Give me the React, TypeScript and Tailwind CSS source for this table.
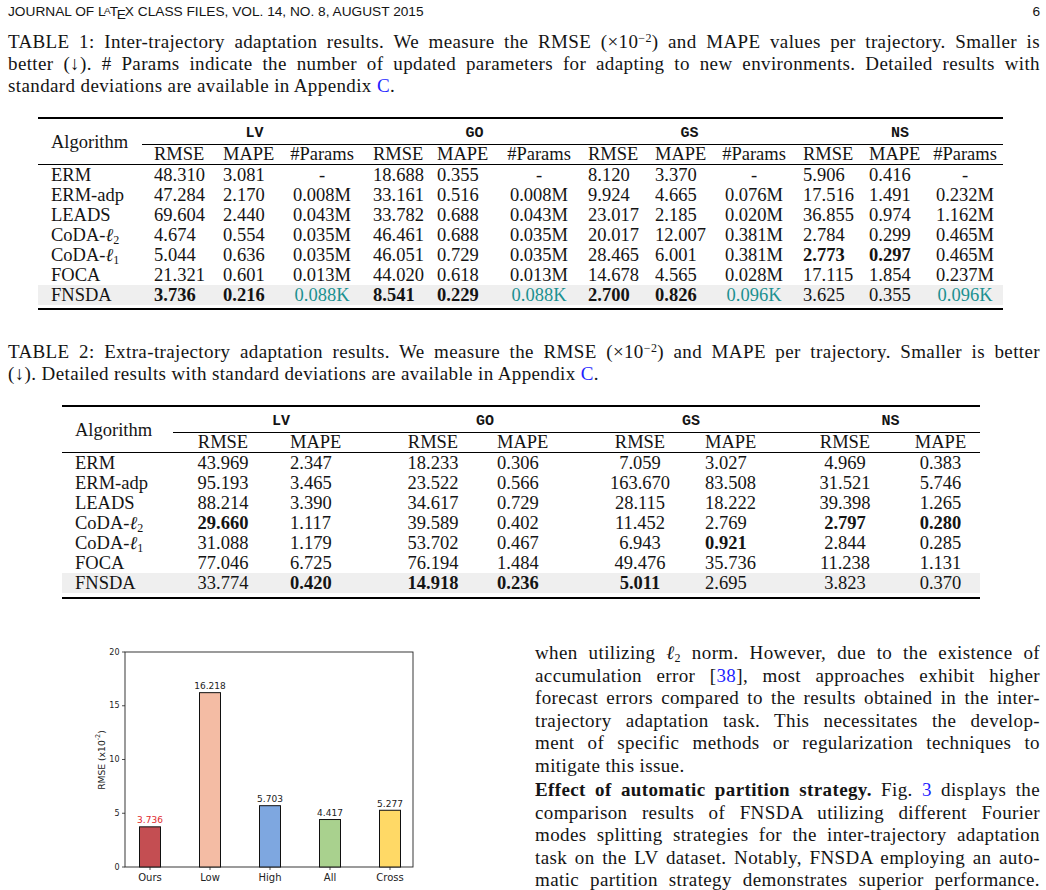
import type { ReactNode } from 'react'

const serif = "font-['Liberation_Serif',serif]"
const mono = "font-['Liberation_Mono',monospace]"

const ink = 'text-[#141414]'

function Ell({ sub }: { sub: string }) {
  return (
    <span className="inline-block">
      <span className="italic">ℓ</span>
      <sub className="text-[12px]">{sub}</sub>
    </span>
  )
}

function Link({ children }: { children: ReactNode }) {
  return <span className="text-[#1f1fff]">{children}</span>
}

// one justified line, last line of a paragraph is left-aligned
function Line({ children, last, h = 'h-[22px]' }: { children: ReactNode; last?: boolean; h?: string }) {
  return <div className={last ? h : `${h} text-justify [text-align-last:justify]`}>{children}</div>
}

function Value({ v }: { v: string }) {
  if (v.startsWith('*')) return <span className="font-bold">{v.slice(1)}</span>
  if (v.startsWith('~')) return <span className="text-[#1c9191]">{v.slice(1)}</span>
  return <>{v}</>
}

const names: ReactNode[] = [
  'ERM',
  'ERM-adp',
  'LEADS',
  <>CoDA-<Ell sub="2" /></>,
  <>CoDA-<Ell sub="1" /></>,
  'FOCA',
  'FNSDA',
]

const groups = ['LV', 'GO', 'GS', 'NS']

const table1 = [
  ['48.310', '3.081', '-', '18.688', '0.355', '-', '8.120', '3.370', '-', '5.906', '0.416', '-'],
  ['47.284', '2.170', '0.008M', '33.161', '0.516', '0.008M', '9.924', '4.665', '0.076M', '17.516', '1.491', '0.232M'],
  ['69.604', '2.440', '0.043M', '33.782', '0.688', '0.043M', '23.017', '2.185', '0.020M', '36.855', '0.974', '1.162M'],
  ['4.674', '0.554', '0.035M', '46.461', '0.688', '0.035M', '20.017', '12.007', '0.381M', '2.784', '0.299', '0.465M'],
  ['5.044', '0.636', '0.035M', '46.051', '0.729', '0.035M', '28.465', '6.001', '0.381M', '*2.773', '*0.297', '0.465M'],
  ['21.321', '0.601', '0.013M', '44.020', '0.618', '0.013M', '14.678', '4.565', '0.028M', '17.115', '1.854', '0.237M'],
  ['*3.736', '*0.216', '~0.088K', '*8.541', '*0.229', '~0.088K', '*2.700', '*0.826', '~0.096K', '3.625', '0.355', '~0.096K'],
]

const table2 = [
  ['43.969', '2.347', '18.233', '0.306', '7.059', '3.027', '4.969', '0.383'],
  ['95.193', '3.465', '23.522', '0.566', '163.670', '83.508', '31.521', '5.746'],
  ['88.214', '3.390', '34.617', '0.729', '28.115', '18.222', '39.398', '1.265'],
  ['*29.660', '1.117', '39.589', '0.402', '11.452', '2.769', '*2.797', '*0.280'],
  ['31.088', '1.179', '53.702', '0.467', '6.943', '*0.921', '2.844', '0.285'],
  ['77.046', '6.725', '76.194', '1.484', '49.476', '35.736', '11.238', '1.131'],
  ['33.774', '*0.420', '*14.918', '*0.236', '*5.011', '2.695', '3.823', '0.370'],
]

const t1Grid = 'grid grid-cols-[104px_75px_60px_90px_64px_65px_86px_67px_62px_86px_66px_64px_76px]'
const t1Align = [
  'pl-[13px]', 'pl-[12px]', 'pl-[6px]', 'text-center',
  'pl-[6px]', 'pl-[6px]', 'text-center',
  'pl-[6px]', 'pl-[6px]', 'text-center',
  'pl-[6px]', 'pl-[6px]', 'text-center',
]

const t2Grid = 'grid grid-cols-[111px_100px_116px_88px_104px_118px_102px_88px_91px]'
const t2Align = [
  'pl-[13px]', 'text-center', 'pl-[17px]', 'text-center', 'pl-[20px]',
  'text-center', 'pl-[6px]', 'text-center', 'text-center pl-[12px]',
]

function ResultTable({
  grid,
  align,
  sub,
  rows,
  bottomPad,
}: {
  grid: string
  align: string[]
  sub: string[]
  rows: string[][]
  bottomPad: string
}) {
  const span = sub.length === 3 ? 'col-span-3' : 'col-span-2'
  return (
    <div className={`border-y-2 border-black text-[18.5px] leading-none ${bottomPad}`}>
      <div className={`${grid} grid-rows-[26px_19px] border-b border-black`}>
        <div className="row-span-2 flex items-center pl-[13px] pt-[2px]">Algorithm</div>
        {groups.map((g) => (
          <div
            key={g}
            className={`${span} flex items-center justify-center border-b border-black pt-[4px] text-[15px] font-bold ${mono}`}
          >
            {g}
          </div>
        ))}
        {groups.flatMap((g, gi) =>
          sub.map((s, i) => (
            <div key={g + s} className={`flex items-center ${align[1 + i + gi * sub.length]}`}>
              <span className="w-full">{s}</span>
            </div>
          )),
        )}
      </div>
      {rows.map((r, ri) => (
        <div key={ri} className={`${grid} h-[20px] items-center ${ri === 6 ? 'bg-[#efefef]' : ''}`}>
          <div className={align[0]}>{names[ri]}</div>
          {r.map((v, ci) => (
            <div key={ci} className={align[ci + 1]}>
              <Value v={v} />
            </div>
          ))}
        </div>
      ))}
    </div>
  )
}

const bars = [
  { label: 'Ours', v: 3.736, fill: '#c44e52', text: '#e0282c' },
  { label: 'Low', v: 16.218, fill: '#f4bca4', text: '#222' },
  { label: 'High', v: 5.703, fill: '#7ea7e0', text: '#222' },
  { label: 'All', v: 4.417, fill: '#a9d18e', text: '#222' },
  { label: 'Cross', v: 5.277, fill: '#ffd966', text: '#222' },
]

function Chart() {
  const base = 227
  const k = 10.75
  return (
    <svg width="340" height="250" viewBox="0 0 340 250" className="block" fontFamily="DejaVu Sans, sans-serif">
      <rect x="45" y="12" width="288" height="215" fill="none" stroke="#222" strokeWidth="0.9" />
      {[0, 5, 10, 15, 20].map((t) => (
        <g key={t}>
          <line x1="42" x2="45" y1={base - t * k} y2={base - t * k} stroke="#222" strokeWidth="0.8" />
          <text x="39.5" y={base - t * k} fontSize="8" textAnchor="end" dominantBaseline="central" fill="#222">
            {t}
          </text>
        </g>
      ))}
      <text
        transform="translate(21 120) rotate(-90)"
        fontSize="9.2"
        textAnchor="middle"
        dominantBaseline="central"
        fill="#222"
      >
        RMSE (x10<tspan fontSize="6.5" dy="-3.5">-2</tspan>
        <tspan dy="3.5">)</tspan>
      </text>
      {bars.map((b, i) => {
        const cx = 70 + i * 60
        const h = b.v * k
        return (
          <g key={b.label}>
            <rect x={cx - 10.5} y={base - h} width="21" height={h} fill={b.fill} stroke="#111" strokeWidth="1" />
            <text x={cx} y={base - h - 6.5} fontSize="9" textAnchor="middle" dominantBaseline="central" fill={b.text}>
              {b.v.toFixed(3)}
            </text>
            <line x1={cx} x2={cx} y1={base} y2={base + 3} stroke="#222" strokeWidth="0.8" />
            <text x={cx} y="237" fontSize="10" textAnchor="middle" dominantBaseline="central" fill="#222">
              {b.label}
            </text>
          </g>
        )
      })}
    </svg>
  )
}

export default function App() {
  return (
    <div className={`h-[890px] w-[1046px] overflow-hidden bg-white pl-[8px] pr-[6px] pt-[4px] ${ink} ${serif}`}>
      <div className="flex h-[16px] items-center justify-between font-['Liberation_Sans',sans-serif] text-[13.7px]">
        <span>
          JOURNAL OF L
          <span className="relative -top-[0.22em] -ml-[0.16em] text-[0.72em]">A</span>
          <span className="-ml-[0.06em]">T</span>
          <span className="relative top-[0.22em] -ml-[0.1em]">E</span>
          <span className="-ml-[0.08em]">X</span> CLASS FILES, VOL. 14, NO. 8, AUGUST 2015
        </span>
        <span>6</span>
      </div>

      <div className="mt-[11px] text-[19px] leading-[22px] tracking-[0.02em]">
        <Line>
          TABLE 1: Inter-trajectory adaptation results. We measure the RMSE (×10<sup className="text-[12px]">−2</sup>) and
          MAPE values per trajectory. Smaller is
        </Line>
        <Line>
          better (↓). # Params indicate the number of updated parameters for adapting to new environments. Detailed results
          with
        </Line>
        <Line last>
          standard deviations are available in Appendix <Link>C</Link>.
        </Line>
      </div>

      <div className="mt-[20px] ml-[30px] w-[965px]">
        <ResultTable grid={t1Grid} align={t1Align} sub={['RMSE', 'MAPE', '#Params']} rows={table1} bottomPad="pb-[3px]" />
      </div>

      <div className="mt-[31px] text-[19px] leading-[22px] tracking-[0.02em]">
        <Line>
          TABLE 2: Extra-trajectory adaptation results. We measure the RMSE (×10<sup className="text-[12px]">−2</sup>) and
          MAPE per trajectory. Smaller is better
        </Line>
        <Line last>
          (↓). Detailed results with standard deviations are available in Appendix <Link>C</Link>.
        </Line>
      </div>

      <div className="mt-[20px] ml-[54px] w-[918px]">
        <ResultTable grid={t2Grid} align={t2Align} sub={['RMSE', 'MAPE']} rows={table2} bottomPad="pb-[4px]" />
      </div>

      <div className="mt-[41px] flex">
        <div className="w-[527px] pl-[72px]">
          <Chart />
        </div>
        <div className="w-[505px] pt-[2px] text-[19px] leading-[22.5px] tracking-[0.02em]">
          <Line h="h-[22.5px]">
            when utilizing <Ell sub="2" /> norm. However, due to the existence of
          </Line>
          <Line h="h-[22.5px]">
            accumulation error [<Link>38</Link>], most approaches exhibit higher
          </Line>
          <Line h="h-[22.5px]">forecast errors compared to the results obtained in the inter-</Line>
          <Line h="h-[22.5px]">trajectory adaptation task. This necessitates the develop-</Line>
          <Line h="h-[22.5px]">ment of specific methods or regularization techniques to</Line>
          <Line h="h-[22.5px]" last>
            mitigate this issue.
          </Line>
          <div className="mt-[2px]">
            <Line h="h-[22.5px]">
              <span className="font-bold">Effect of automatic partition strategy.</span> Fig. <Link>3</Link> displays
              the
            </Line>
          </div>
          <Line h="h-[22.5px]">comparison results of FNSDA utilizing different Fourier</Line>
          <Line h="h-[22.5px]">modes splitting strategies for the inter-trajectory adaptation</Line>
          <Line h="h-[22.5px]">task on the LV dataset. Notably, FNSDA employing an auto-</Line>
          <Line h="h-[22.5px]">matic partition strategy demonstrates superior performance.</Line>
        </div>
      </div>
    </div>
  )
}
